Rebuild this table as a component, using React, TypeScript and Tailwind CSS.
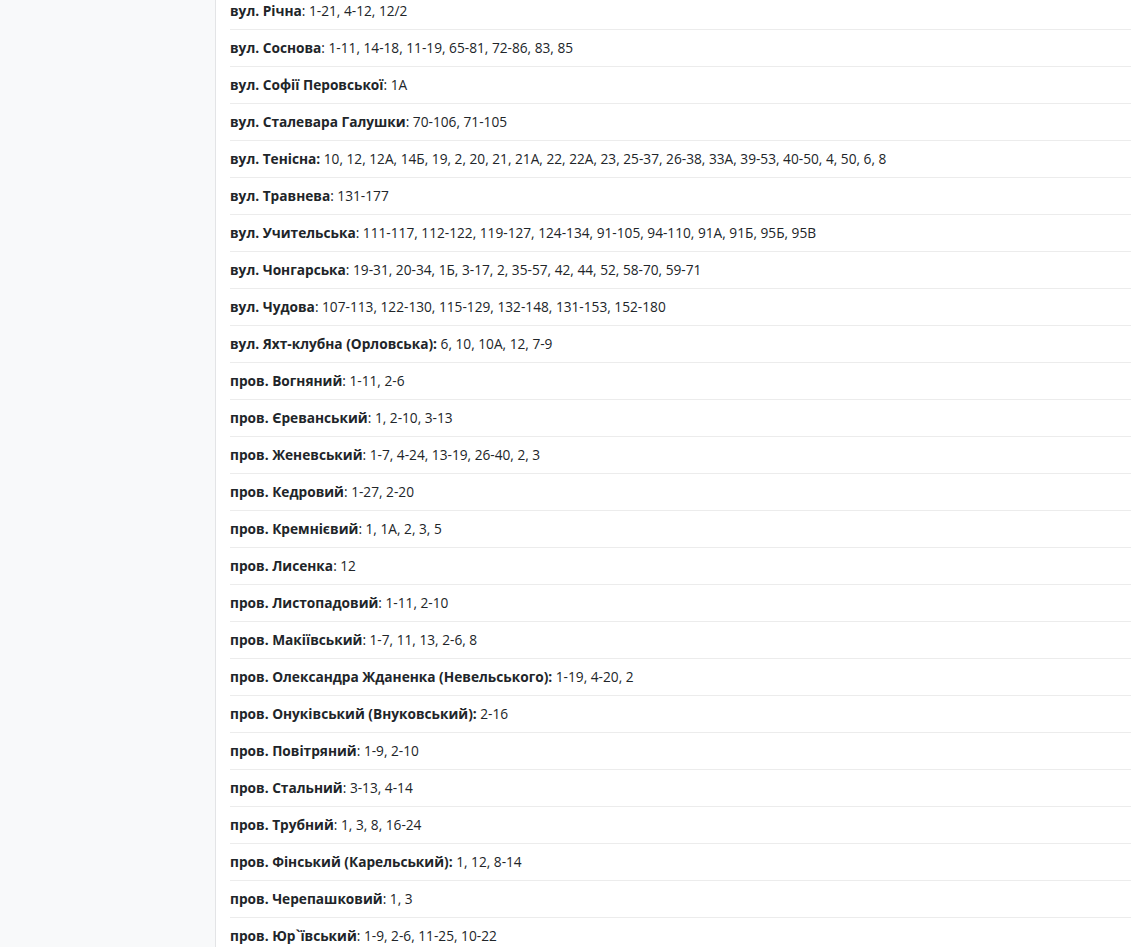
import React from 'react';

type Street = { name: string; houses: string; boldColon?: boolean };

const streets: Street[] = [
  { name: 'вул. Річна', houses: '1-21, 4-12, 12/2' },
  { name: 'вул. Соснова', houses: '1-11, 14-18, 11-19, 65-81, 72-86, 83, 85' },
  { name: 'вул. Софії Перовської', houses: '1А' },
  { name: 'вул. Сталевара Галушки', houses: '70-106, 71-105' },
  { name: 'вул. Тенісна', houses: '10, 12, 12А, 14Б, 19, 2, 20, 21, 21А, 22, 22А, 23, 25-37, 26-38, 33А, 39-53, 40-50, 4, 50, 6, 8', boldColon: true },
  { name: 'вул. Травнева', houses: '131-177' },
  { name: 'вул. Учительська', houses: '111-117, 112-122, 119-127, 124-134, 91-105, 94-110, 91А, 91Б, 95Б, 95В' },
  { name: 'вул. Чонгарська', houses: '19-31, 20-34, 1Б, 3-17, 2, 35-57, 42, 44, 52, 58-70, 59-71' },
  { name: 'вул. Чудова', houses: '107-113, 122-130, 115-129, 132-148, 131-153, 152-180' },
  { name: 'вул. Яхт-клубна (Орловська)', houses: '6, 10, 10А, 12, 7-9', boldColon: true },
  { name: 'пров. Вогняний', houses: '1-11, 2-6' },
  { name: 'пров. Єреванський', houses: '1, 2-10, 3-13' },
  { name: 'пров. Женевський', houses: '1-7, 4-24, 13-19, 26-40, 2, 3' },
  { name: 'пров. Кедровий', houses: '1-27, 2-20' },
  { name: 'пров. Кремнієвий', houses: '1, 1А, 2, 3, 5' },
  { name: 'пров. Лисенка', houses: '12' },
  { name: 'пров. Листопадовий', houses: '1-11, 2-10' },
  { name: 'пров. Макіївський', houses: '1-7, 11, 13, 2-6, 8' },
  { name: 'пров. Олександра Жданенка (Невельського)', houses: '1-19, 4-20, 2', boldColon: true },
  { name: 'пров. Онуківський (Внуковський)', houses: '2-16', boldColon: true },
  { name: 'пров. Повітряний', houses: '1-9, 2-10' },
  { name: 'пров. Стальний', houses: '3-13, 4-14' },
  { name: 'пров. Трубний', houses: '1, 3, 8, 16-24' },
  { name: 'пров. Фінський (Карельський)', houses: '1, 12, 8-14', boldColon: true },
  { name: 'пров. Черепашковий', houses: '1, 3' },
  { name: 'пров. Юр`ївський', houses: '1-9, 2-6, 11-25, 10-22' },
];

const App: React.FC = () => {
  return (
    <div className="h-[947px] overflow-hidden flex bg-white text-[#212529] font-['Open_Sans','Noto_Sans',sans-serif] text-[13.7px]">
      <aside className="w-[216px] shrink-0 bg-[#f8f9fa] border-r border-[#e3e4e6]" />
      <main className="flex-1 pl-[14px]">
        <ul className="-mt-[7px]">
          {streets.map((s, i) => (
            <li
              key={i}
              className="py-[8px] leading-[20px] border-b border-[#ececec] whitespace-nowrap"
            >
              {s.boldColon ? (
                <b className="font-bold">{s.name}:</b>
              ) : (
                <>
                  <b className="font-bold">{s.name}</b>:
                </>
              )}{' '}
              {s.houses}
            </li>
          ))}
        </ul>
      </main>
    </div>
  );
};

export default App;
